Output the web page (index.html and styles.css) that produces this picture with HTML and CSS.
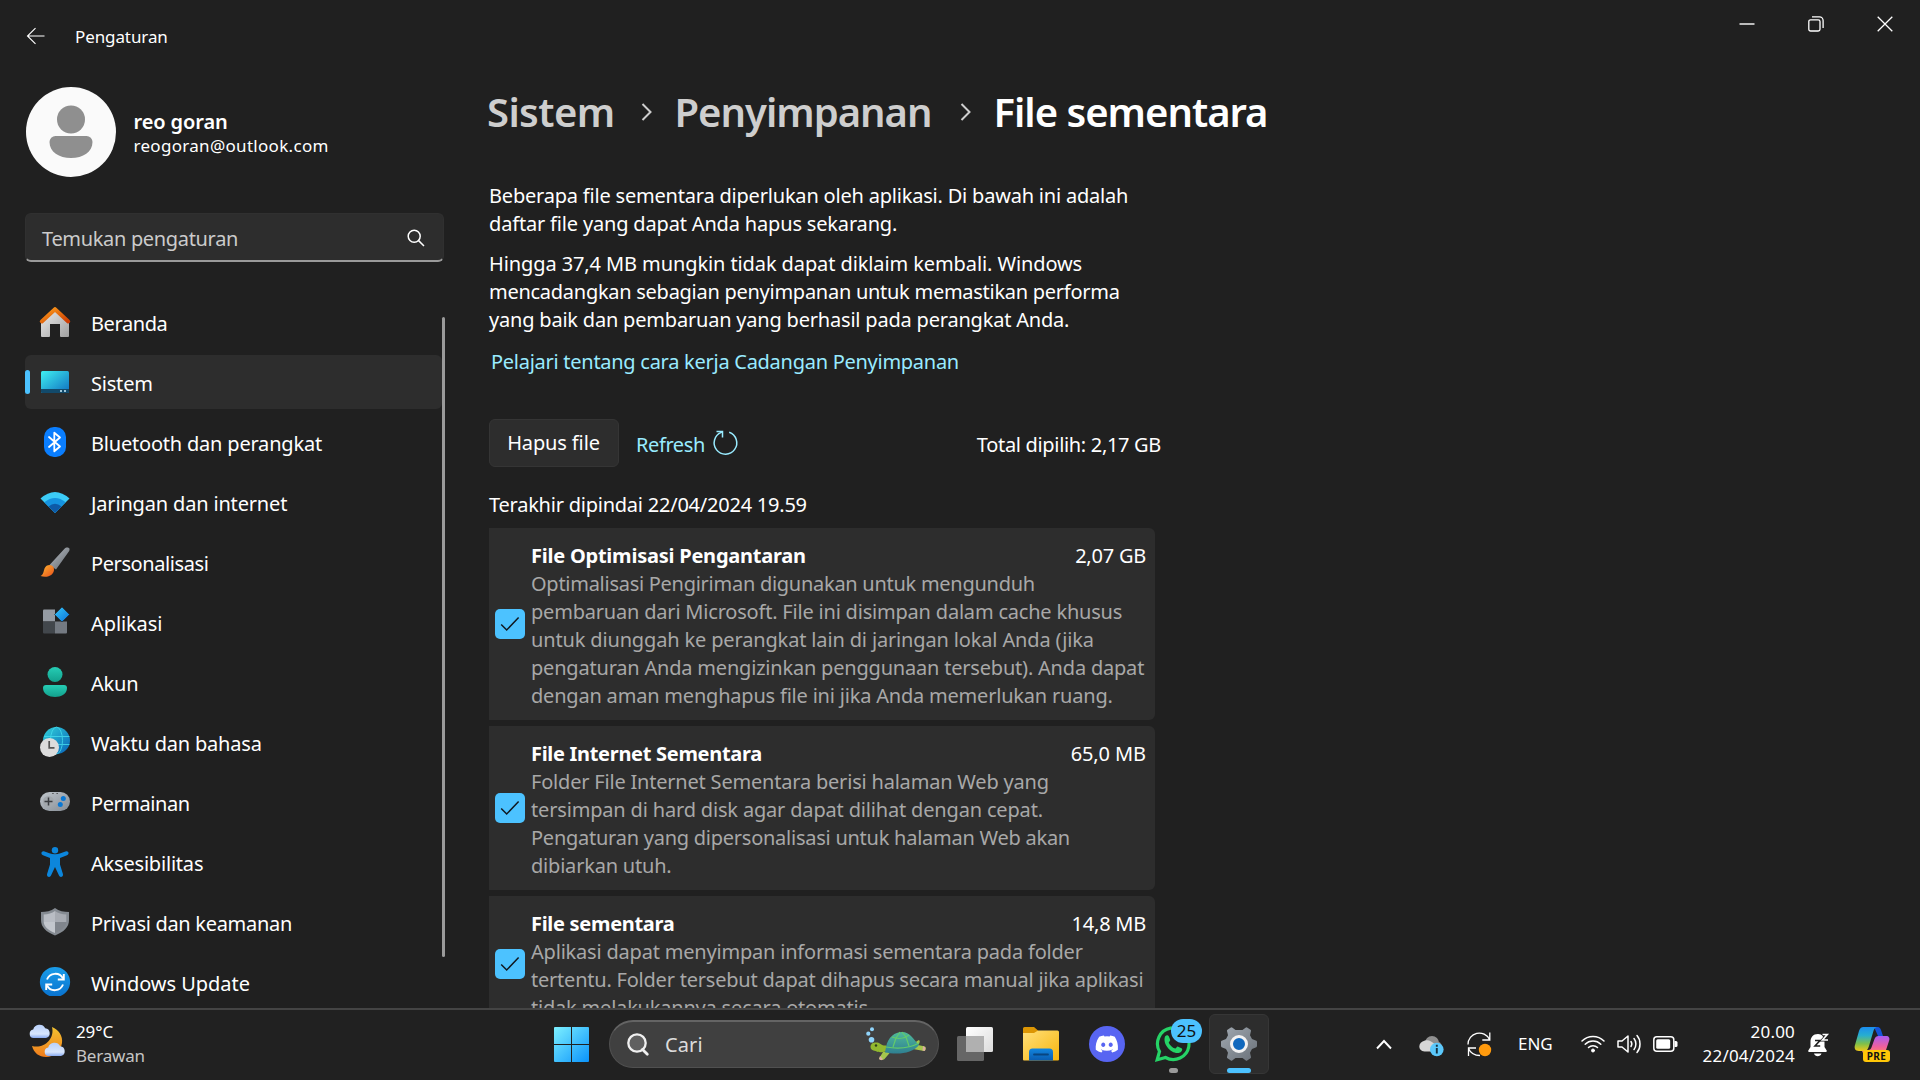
FILE: index.html
```
<!DOCTYPE html>
<html lang="id">
<head>
<meta charset="utf-8">
<title>Pengaturan</title>
<link rel="stylesheet" href="styles.css">
</head>
<body>
<div class="window">
  <header class="titlebar">
    <svg class="back" width="20" height="18" viewBox="0 0 20 18" fill="none" stroke="#fff" stroke-width="1.1"><path d="M18.5 9H1.500M9.500 1.200L1.500 9l8 7.800"/></svg>
    <span class="app-name">Pengaturan</span>
    <div class="controls">
      <svg width="16" height="16" viewBox="0 0 16 16" stroke="#fff" stroke-width="1.4"><path d="M.5 8h15"/></svg>
      <svg width="16" height="16" viewBox="0 0 16 16" fill="none" stroke="#fff" stroke-width="1.3"><rect x=".8" y="3.800" width="11.200" height="11.200" rx="1.800"/><path d="M4 .9h7.500a3.600 3.600 0 0 1 3.600 3.600V12"/></svg>
      <svg width="16" height="16" viewBox="0 0 16 16" stroke="#fff" stroke-width="1.3"><path d="M.7.700l14.600 14.600M15.300.700L.7 15.300"/></svg>
    </div>
  </header>
  <div class="content">
    <aside class="sidebar">
      <div class="profile">
        <svg width="90" height="90" viewBox="0 0 90 90"><circle cx="45" cy="45" r="45" fill="#fafafa"/><g fill="#8f8f8f"><circle cx="45" cy="32.500" r="14"/><path d="M29.500 49h31a6 6 0 0 1 6 6c0 10-9.500 16-21.500 16s-21.500-6-21.500-16a6 6 0 0 1 6-6z"/></g></svg>
        <div>
          <div class="name">reo goran</div>
          <div class="email">reogoran@outlook.com</div>
        </div>
      </div>
      <div class="search">
        <span>Temukan pengaturan</span>
        <svg width="18" height="18" viewBox="0 0 18 18" fill="none" stroke="#fff" stroke-width="1.500"><circle cx="7.200" cy="7.200" r="6"/><path d="M11.600 11.600L17 17"/></svg>
      </div>
      <div class="nav-wrap">
      <nav class="nav">
        <a class="item ls-40">
          <svg width="30" height="30" viewBox="0 0 30 30"><defs><linearGradient id="hw" x2="1" y2="1"><stop stop-color="#eee"/><stop offset="1" stop-color="#a0a0a0"/></linearGradient><linearGradient id="hr" x2="1" y2="1"><stop stop-color="#ffa01c"/><stop offset="1" stop-color="#cc3b02"/></linearGradient></defs><path d="M1 14L15 2l14 12v15a1 1 0 0 1-1 1h-7a1 1 0 0 1-1-1V17H10v12a1 1 0 0 1-1 1H2a1 1 0 0 1-1-1z" fill="url(#hw)"/><path d="M1.800 14.500L15 2.200l13.200 12.300" fill="none" stroke="url(#hr)" stroke-width="4" stroke-linejoin="round" stroke-linecap="round"/></svg>
          <span>Beranda</span></a>
        <a class="item active ls-20">
          <svg width="30" height="30" viewBox="0 0 30 30"><defs><linearGradient id="sy" x2="1" y2="1"><stop stop-color="#3ff0f0"/><stop offset="1" stop-color="#0f6fc0"/></linearGradient></defs><rect x="1" y="4" width="28" height="22" rx="1.500" fill="url(#sy)"/><path d="M1 22h28v2.500a1.500 1.500 0 0 1-1.500 1.500h-25A1.500 1.500 0 0 1 1 24.500z" fill="#124a6b"/><path d="M20 23h2v2h-2zM24 23h2v2h-2z" fill="#9cc5d8"/></svg>
          <span>Sistem</span></a>
        <a class="item ls-20">
          <svg width="30" height="30" viewBox="0 0 30 30"><rect x="4" width="22" height="30" rx="10" fill="#0a7eff"/><path d="M9 10l11 9.500-5.700 4.800V5.700L20 10.500 9 20" fill="none" stroke="#fff" stroke-width="1.800" stroke-linejoin="round" stroke-linecap="round"/></svg>
          <span>Bluetooth dan perangkat</span></a>
        <a class="item ls-17">
          <svg width="30" height="30" viewBox="0 0 30 30"><path d="M.5 11.500Q15-1.500 29.500 11.500L15 26z" fill="#3cccf7"/><path d="M4.300 15.300Q15 6.500 25.700 15.300L15 26z" fill="#1593e0"/><path d="M8.500 19.500Q15 13.800 21.500 19.500L15 26z" fill="#0d5aa7"/></svg>
          <span>Jaringan dan internet</span></a>
        <a class="item ls-40">
          <svg width="30" height="30" viewBox="0 0 30 30"><defs><linearGradient id="br" x2="1" y2="1"><stop stop-color="#b9bec4"/><stop offset="1" stop-color="#60666d"/></linearGradient><linearGradient id="bt" x2="1" y2="1"><stop stop-color="#ffb830"/><stop offset="1" stop-color="#e8501c"/></linearGradient></defs><path d="M9.500 18L24.500 1.800C26-.1 31 0 29.200 4L16 22.500z" fill="url(#br)"/><path d="M4.500 21.500c2-5 9-4.500 9.500.5.300 6-6.500 9.500-13.500 7 2.800-1 3-4.500 4-7.500z" fill="url(#bt)"/></svg>
          <span>Personalisasi</span></a>
        <a class="item ls-10">
          <svg width="30" height="30" viewBox="0 0 30 30"><defs><linearGradient id="ap" x2="1" y2="1"><stop stop-color="#35c8fa"/><stop offset="1" stop-color="#0a70d8"/></linearGradient></defs><path d="M3 3.500a1 1 0 0 1 1-1h11v12H3z" fill="#959ba3"/><path d="M3 14.500h12v12H4a1 1 0 0 1-1-1z" fill="#42474c"/><path d="M15 14.500h12v11a1 1 0 0 1-1 1H15z" fill="#747a82"/><path d="M22 0l7.500 7.500L22 15l-7.500-7.500z" fill="url(#ap)" stroke="#202020" stroke-width=".6"/></svg>
          <span>Aplikasi</span></a>
        <a class="item ls-20">
          <svg width="30" height="30" viewBox="0 0 30 30"><defs><linearGradient id="ak" x2="0" y2="1"><stop stop-color="#26cdb5"/><stop offset="1" stop-color="#12a08c"/></linearGradient></defs><circle cx="15" cy="7.500" r="7.500" fill="url(#ak)"/><path d="M6 18h18a3 3 0 0 1 3 3c0 6-6 9-12 9S3 27 3 21a3 3 0 0 1 3-3z" fill="url(#ak)"/></svg>
          <span>Akun</span></a>
        <a class="item ls-20">
          <svg width="30" height="30" viewBox="0 0 30 30"><defs><linearGradient id="gl" x2="1" y2="1"><stop stop-color="#31d3da"/><stop offset="1" stop-color="#0860b8"/></linearGradient></defs><circle cx="16.500" cy="13.500" r="13.500" fill="url(#gl)"/><g fill="none" stroke="#46dcee" stroke-width="1" opacity=".8"><path d="M4 9.500h25.500M4 17.500h25.500"/><ellipse cx="16.500" cy="13.500" rx="6" ry="13.500"/></g><circle cx="9.500" cy="20.500" r="9.500" fill="#dcdcdc"/><path d="M9.200 14v6.800h5.300" fill="none" stroke="#555" stroke-width="1.700"/></svg>
          <span>Waktu dan bahasa</span></a>
        <a class="item ls-45">
          <svg width="30" height="30" viewBox="0 0 30 30"><defs><linearGradient id="gp" x2="1" y2="1"><stop stop-color="#bfc5cb"/><stop offset="1" stop-color="#858c94"/></linearGradient></defs><rect y="5" width="30" height="19" rx="9.500" fill="url(#gp)"/><circle cx="8.500" cy="14.500" r="5.500" fill="#a2a7ac"/><path d="M4.500 14.500h8M8.500 10.500v8" stroke="#3a3d41" stroke-width="1.500"/><circle cx="23.300" cy="11.500" r="2.500" fill="#0a78d4"/><circle cx="20.300" cy="17.500" r="2.500" fill="#0a78d4"/><path d="M12.300 6.500h1.300M16.500 6.500h1.300" stroke="#444" stroke-width="1.200"/></svg>
          <span>Permainan</span></a>
        <a class="item ls-20">
          <svg width="30" height="30" viewBox="0 0 30 30" fill="#0c86dc"><circle cx="15" cy="3.200" r="3.200"/><path d="M3.800 4.300c4 1.400 7.200 3 11.200 3s7.200-1.600 11.200-3c2.600-.4 3.300 3.100.8 3.900l-7 2.900v6.400l3 9.800c.5 2.600-3 3.600-4 1.300L15 20l-4 8.600c-1 2.300-4.500 1.300-4-1.300l3-9.800v-6.400L3 8.200C.5 7.400 1.200 3.900 3.800 4.300z"/></svg>
          <span>Aksesibilitas</span></a>
        <a class="item ls-30">
          <svg width="30" height="30" viewBox="0 0 30 30"><path d="M15 1c4 3.200 9 4 14 4v8c0 7-5 12-14 15.500C6 25 1 20 1 13V5c5 0 10-.8 14-4z" fill="#858b92"/><path d="M15 4v11H3.700V7.500C8 7.300 12 6.300 15 4z" fill="#b9bdc4"/><path d="M15 4v11h11.300V7.500C22 7.300 18 6.300 15 4z" fill="#a7abb2"/><path d="M15 15v11C8 23.500 4 19.500 3.700 15z" fill="#c3c7cd"/><path d="M15 15v11c7-2.500 11-6.500 11.300-11z" fill="#80858c"/></svg>
          <span>Privasi dan keamanan</span></a>
        <a class="item ls-05">
          <svg width="30" height="30" viewBox="0 0 30 30"><defs><linearGradient id="wu" x2="0" y2="1"><stop stop-color="#1a9ce8"/><stop offset="1" stop-color="#0a74d0"/></linearGradient></defs><path d="M15 0a15 15 0 0 1 5.500 29h-11A15 15 0 0 1 15 0z" fill="url(#wu)"/><g fill="none" stroke="#fff" stroke-width="1.900"><path d="M7 12.500A8.800 8.800 0 0 1 23 11.500"/><path d="M23 17.500A8.800 8.800 0 0 1 7 18.500"/><path d="M23.800 7v5.500h-6M6.200 23v-5.500h6"/></g></svg>
          <span>Windows Update</span></a>
      </nav>
      <div class="scrollbar"></div>
      </div>
    </aside>
    <main class="main">
      <h1 class="crumbs">
        <span class="crumb c1">Sistem <svg width="12" height="18" viewBox="0 0 12 18" fill="none" stroke="#cecece" stroke-width="2"><path d="M1.500 1l8 8-8 8"/></svg></span>
        <span class="crumb c2">Penyimpanan <svg width="12" height="18" viewBox="0 0 12 18" fill="none" stroke="#cecece" stroke-width="2"><path d="M1.500 1l8 8-8 8"/></svg></span>
        <span class="crumb c3">File sementara</span>
      </h1>
      <p class="intro">
        <span class="line">Beberapa file sementara diperlukan oleh aplikasi. Di bawah ini adalah</span>
        <span class="line ls-17">daftar file yang dapat Anda hapus sekarang.</span>
      </p>
      <p class="note">
        <span class="line ls-10">Hingga 37,4 MB mungkin tidak dapat diklaim kembali. Windows</span>
        <span class="line ls-27">mencadangkan sebagian penyimpanan untuk memastikan performa</span>
        <span class="line ls-20">yang baik dan pembaruan yang berhasil pada perangkat Anda.</span>
      </p>
      <a class="link ls-27">Pelajari tentang cara kerja Cadangan Penyimpanan</a>
      <div class="actions">
        <button class="button">Hapus file</button>
        <a class="refresh ls-40">Refresh</a>
        <svg width="25" height="26" viewBox="0 0 25 26" fill="none" stroke="#99ebff" stroke-width="1.500"><path d="M16.200 2.200a11.300 11.300 0 1 1-8 .2L9 2"/><path d="M3.500 1.500h6v6"/></svg>
        <span class="total">Total dipilih: 2,17 GB</span>
      </div>
      <p class="scanned">Terakhir dipindai 22/04/2024 19.59</p>
      <section class="card">
        <span class="check"><svg width="20" height="16" viewBox="0 0 20 16" fill="none" stroke="#101820" stroke-width="1.500"><path d="M1.200 8.500l5.500 5.500L18.600 1.500"/></svg></span>
        <div class="text">
          <div class="head"><b>File Optimisasi Pengantaran</b><span>2,07 GB</span></div>
          <p class="desc">
            <span class="line ls-27">Optimalisasi Pengiriman digunakan untuk mengunduh</span>
            <span class="line">pembaruan dari Microsoft. File ini disimpan dalam cache khusus</span>
            <span class="line ls-15">untuk diunggah ke perangkat lain di jaringan lokal Anda (jika</span>
            <span class="line">pengaturan Anda mengizinkan penggunaan tersebut). Anda dapat</span>
            <span class="line">dengan aman menghapus file ini jika Anda memerlukan ruang.</span>
          </p>
        </div>
      </section>
      <section class="card">
        <span class="check"><svg width="20" height="16" viewBox="0 0 20 16" fill="none" stroke="#101820" stroke-width="1.500"><path d="M1.200 8.500l5.500 5.500L18.600 1.500"/></svg></span>
        <div class="text">
          <div class="head"><b class="ls-30">File Internet Sementara</b><span class="ls-10">65,0 MB</span></div>
          <p class="desc">
            <span class="line">Folder File Internet Sementara berisi halaman Web yang</span>
            <span class="line ls-17">tersimpan di hard disk agar dapat dilihat dengan cepat.</span>
            <span class="line ls-25">Pengaturan yang dipersonalisasi untuk halaman Web akan</span>
            <span class="line">dibiarkan utuh.</span>
          </p>
        </div>
      </section>
      <section class="card">
        <span class="check"><svg width="20" height="16" viewBox="0 0 20 16" fill="none" stroke="#101820" stroke-width="1.500"><path d="M1.200 8.500l5.500 5.500L18.600 1.500"/></svg></span>
        <div class="text">
          <div class="head"><b class="ls-30">File sementara</b><span>14,8 MB</span></div>
          <p class="desc">
            <span class="line">Aplikasi dapat menyimpan informasi sementara pada folder</span>
            <span class="line ls-22">tertentu. Folder tersebut dapat dihapus secara manual jika aplikasi</span>
            <span class="line">tidak melakukannya secara otomatis.</span>
          </p>
        </div>
      </section>
    </main>
  </div>
</div>
<footer class="taskbar">
  <div class="weather">
    <svg width="36" height="36" viewBox="0 0 36 36"><defs><linearGradient id="mo" x2="0" y2="1"><stop stop-color="#f2c230"/><stop offset="1" stop-color="#f07c1c"/></linearGradient><linearGradient id="cl" x2="0" y2="1"><stop stop-color="#b8d0fa"/><stop offset=".7" stop-color="#d8e6fd"/><stop offset="1" stop-color="#88aaf0"/></linearGradient></defs><path d="M23 3c7 3 11 9 10 16-1.500 9-8 14-16 14C10 33 5 29 3 22c12 3 23-7 20-19z" fill="url(#mo)"/><path d="M4.500 14a4.300 4.300 0 0 1-.3-8.500 6.500 6.500 0 0 1 12-1.300A5 5 0 0 1 17 14z" fill="url(#cl)"/><path d="M19.500 32a4.300 4.300 0 0 1-.3-8.500 6.500 6.500 0 0 1 12-1.300A5 5 0 0 1 32 32z" fill="url(#cl)"/></svg>
    <div class="weather-text"><span>29°C</span><span class="sub">Berawan</span></div>
  </div>
  <div class="apps">
    <svg width="35" height="35" viewBox="0 0 35 35"><defs><linearGradient id="wi" x2="1" y2="1"><stop stop-color="#7df0ff"/><stop offset="1" stop-color="#0a93fb"/></linearGradient></defs><path d="M1 0h16v17H0V1a1 1 0 0 1 1-1zM18 0h16a1 1 0 0 1 1 1v16H18zM0 18h17v17H1a1 1 0 0 1-1-1zM18 18h17v16a1 1 0 0 1-1 1H18z" fill="url(#wi)"/></svg>
    <div class="pill">
      <svg width="22" height="24" viewBox="0 0 22 24" fill="none" stroke="#f0f0f0"><circle cx="10" cy="10" r="8.700" stroke-width="2.300" fill="#606060"/><path d="M15.500 16.500l4.800 4.800" stroke-width="2.800" stroke-linecap="round"/></svg>
      <span>Cari</span>
      <svg class="turtle" width="60" height="34" viewBox="0 0 60 34"><defs><linearGradient id="sh" x2="0" y2="1"><stop stop-color="#4fb99a"/><stop offset="1" stop-color="#2f8092"/></linearGradient></defs><g fill="#90d4fb"><circle cx="6" cy="2.200" r="2"/><circle cx="2.300" cy="6.700" r="2.100"/><circle cx="5.500" cy="12.800" r="2.800"/></g><path d="M50 15c4-4 5 0 2 3l7 1.500c1.500 2 1 4-1 4.500l-11-2zM17 25l-4 6.500c1 2 4 2 5.500.5l6-7z" fill="#a5c64d"/><path d="M57 19l2.500 1.500-.5 3.500-2.500-.5zM14 29l-1 3c1.500 1.500 3 1.500 4 0z" fill="#dcaea0"/><path d="M4.500 20c0-4 3.500-5 7-4.500 3 .5 4 3.500 9 3v6c-6 1-8 1-11-.5-3-.5-5-1.500-5-4z" fill="#92b82f"/><circle cx="10" cy="18.500" r="1.200" fill="#30401a"/><path d="M20 20C22 10 29 5 36 5c8 0 11 7 17 13-4 6-14 8.500-22 8.500-5 0-9-.5-12-1z" fill="url(#sh)"/><g fill="none" stroke="#63cb6a" stroke-width="1.200"><path d="M20 20c12 2 24 1 33-4M26 10c5 2 12 2 17-2M30 11l-3 9M40 10l3 9M30 11l4-6M40 10l-4-5"/></g></svg>
    </div>
    <svg class="tv" width="36" height="34" viewBox="0 0 36 34"><defs><linearGradient id="t1" x2="1" y2="1"><stop stop-color="#fff"/><stop offset="1" stop-color="#dcdcdc"/></linearGradient></defs><rect y="9" width="27" height="25" rx="1.500" fill="#666"/><rect x="9" width="27" height="25" rx="1.500" fill="url(#t1)"/><path d="M9 9h18v16H9z" fill="#b0b0b0"/></svg>
    <svg class="app" width="36" height="34" viewBox="0 0 36 34"><defs><linearGradient id="fo" x2="1" y2="1"><stop stop-color="#ffe07a"/><stop offset="1" stop-color="#f8b50d"/></linearGradient><linearGradient id="fb" x2="0" y2="1"><stop stop-color="#1285de"/><stop offset="1" stop-color="#0a5cb0"/></linearGradient></defs><path d="M0 1.500A1.500 1.500 0 0 1 1.500 0H11l4 3.500V8H0z" fill="#dc9604"/><path d="M0 6h11l4-2.500h19.500A1.500 1.500 0 0 1 36 5v27.500a1 1 0 0 1-1 1H1a1 1 0 0 1-1-1z" fill="url(#fo)"/><path d="M6 33.500V25a3.500 3.500 0 0 1 3.500-3.500h17A3.500 3.500 0 0 1 30 25v8.500z" fill="url(#fb)"/><path d="M11 27.500h14" stroke="#084580" stroke-width="1.800" stroke-linecap="round"/></svg>
    <svg class="app" width="36" height="36" viewBox="0 0 36 36"><circle cx="18" cy="18" r="18" fill="#5865f2"/><path transform="translate(6.700 6.700) scale(.94)" fill="#fff" d="M20.317 4.370a19.800 19.800 0 0 0-4.885-1.515c-.21.375-.455.880-.608 1.250a18.300 18.300 0 0 0-5.487 0c-.163-.4-.405-.875-.617-1.250A19.700 19.700 0 0 0 3.677 4.370C.533 9.046-.32 13.580.1 18.058a19.900 19.900 0 0 0 5.993 3.030c.46-.63.873-1.295 1.226-1.994a13 13 0 0 1-1.872-.892l.37-.29c3.928 1.793 8.180 1.793 12.062 0l.37.290c-.6.35-1.220.645-1.873.892.36.700.772 1.362 1.225 1.993a19.800 19.800 0 0 0 6.002-3.030c.5-5.177-.838-9.674-3.286-13.687zM8.020 15.330c-1.183 0-2.157-1.085-2.157-2.420 0-1.332.955-2.418 2.157-2.418 1.210 0 2.176 1.095 2.157 2.420 0 1.332-.956 2.418-2.157 2.418zm7.975 0c-1.183 0-2.157-1.085-2.157-2.420 0-1.332.955-2.418 2.157-2.418 1.210 0 2.176 1.095 2.157 2.420 0 1.332-.946 2.418-2.157 2.418z"/></svg>
    <div class="whatsapp">
      <svg width="36" height="36" viewBox="0 0 36 36"><path d="M2.200 33.800l2.300-8.300A15.800 15.800 0 1 1 10.500 31.500z" fill="none" stroke="#25d366" stroke-width="3.200"/><path d="M10 10.500c1.500-1.800 3.300-1.500 4 .3l1.200 3c.3 1-1.300 2.200-1.500 2.900 1.500 2.900 3.500 4.700 6.500 5.900.8-.3 1.700-2.200 2.500-2.200l3.800 1.800c1.700 1 .2 3.500-1.500 4.300C18 29.500 7 19 10 10.500z" fill="#25d366"/></svg>
      <span class="badge">25</span>
      <i class="dot"></i>
    </div>
    <div class="tile">
      <svg width="36" height="36" viewBox="0 0 36 36"><defs><linearGradient id="ge" x2="1" y2="1"><stop stop-color="#a0a8b0"/><stop offset="1" stop-color="#6a7179"/></linearGradient></defs><path d="M9.500 1.800c.8-.7 1.300-.7 2 0l3 2.200h7l3-2.200c.7-.7 1.200-.7 2 0l3 2c.7.700.7 1 .3 2l-.8 3.500 2 3.700 3.700 1.500c1 .3 1.300.8 1.300 1.700v3.600c0 .9-.3 1.400-1.300 1.700L31 23l-2 3.700.8 3.500c.4 1 .4 1.300-.3 2l-3 2c-.8.700-1.300.7-2 0l-3-2.200h-7l-3 2.200c-.7.700-1.200.7-2 0l-3-2c-.7-.7-.7-1-.3-2l.8-3.500L5 23l-3.700-1.500C.3 21.200 0 20.700 0 19.800v-3.600c0-.9.300-1.400 1.300-1.700L5 13l2-3.700-.8-3.500c-.4-1-.4-1.300.3-2z" fill="url(#ge)"/><circle cx="18" cy="18" r="7.500" fill="#1068bd" stroke="#f2f2f2" stroke-width="3"/></svg>
      <i class="running"></i>
    </div>
  </div>
  <div class="tray">
    <svg width="16" height="11" viewBox="0 0 16 11" fill="none" stroke="#fff" stroke-width="1.900"><path d="M1 9.500l7-7.500 7 7.500"/></svg>
    <svg class="cloudy" width="25" height="22" viewBox="0 0 25 22"><circle cx="13" cy="8" r="7" fill="#8f8f8f"/><circle cx="18" cy="11" r="4.500" fill="#8f8f8f"/><path d="M6 5.500c4-1 6 1 9 3v8H5.500C-1.500 16 -1.500 7 6 5.500z" fill="#d6d6d6"/><circle cx="17.800" cy="14.500" r="6.800" fill="#5bc8fb"/><path d="M17.800 13v5.500M17.800 9.800v2" stroke="#153040" stroke-width="1.900"/></svg>
    <svg class="sync" width="25" height="26" viewBox="0 0 25 26" fill="none" stroke="#fff" stroke-width="1.300"><path d="M1 13.500A11.300 11.300 0 0 1 22.500 8.500M22.800 1.500v7.500h-7.500M1.500 25v-8H9M1.500 17.500c2 4.500 6 7 11.500 7"/><circle cx="18" cy="19" r="6.200" fill="#ff9a0d" stroke="none"/></svg>
    <span class="lang">ENG</span>
    <svg class="wifi" width="24" height="18" viewBox="0 0 24 18" fill="none" stroke="#fff" stroke-width="1.500" stroke-linecap="round"><path d="M1 6a15.500 15.500 0 0 1 22 0M4.200 9.200a11 11 0 0 1 15.600 0M7.500 12.500a6.400 6.400 0 0 1 9 0"/><circle cx="12" cy="15.500" r="1.500" fill="#fff" stroke-width="1"/></svg>
    <svg class="vol" width="24" height="20" viewBox="0 0 24 20" fill="none" stroke="#fff" stroke-width="1.500" stroke-linecap="round" stroke-linejoin="round"><path d="M1 7v6h4l6 5V2L5 7zM14 7.500c1 1.500 1 3.500 0 5M17 4.500c2.500 3 2.500 8 0 11M20 1.500c4 4.500 4 12.500 0 17"/></svg>
    <svg class="bat" width="25" height="16" viewBox="0 0 25 16"><rect x=".8" y=".8" width="20" height="14.400" rx="3" fill="none" stroke="#fff" stroke-width="1.500"/><rect x="3.200" y="3.200" width="14" height="9.600" rx="1.500" fill="#fff"/><path d="M21.500 5h1.500a1.500 1.500 0 0 1 1.500 1.500v3A1.500 1.500 0 0 1 23 11h-1.500z" fill="#fff"/></svg>
    <div class="clock"><span class="time">20.00</span><span>22/04/2024</span></div>
    <svg class="bell" width="22" height="24" viewBox="0 0 22 24"><path d="M10 1C5 1 2.500 4.500 2.500 9v5L.3 17.500c-.3.900.200 1.500 1 1.500h16.400c.8 0 1.300-.6 1-1.500L16.500 14V9C16.500 4.500 14 1 10 1zM6 20.500h7.500c-1 3.500-6.500 3.500-7.500 0z" fill="#fff"/><path d="M7 7.500h5l-5 5.500h5.200" fill="none" stroke="#202020" stroke-width="1.600"/><path d="M14.500 1.500h4.800l-4.800 5.500H20" fill="none" stroke="#202020" stroke-width="3"/><path d="M14.500 1.500h4.800l-4.800 5.500H20" fill="none" stroke="#fff" stroke-width="1.600"/></svg>
    <div class="copilot">
      <svg width="36" height="28" viewBox="0 0 36 28"><defs><linearGradient id="c1" x2="0" y2="1"><stop stop-color="#1b8df0"/><stop offset=".35" stop-color="#27aed0"/><stop offset=".7" stop-color="#7fc04a"/><stop offset="1" stop-color="#f0c818"/></linearGradient><linearGradient id="c2" x2="0" y2="1"><stop stop-color="#a95cf2"/><stop offset=".6" stop-color="#f0609c"/><stop offset="1" stop-color="#ff8a60"/></linearGradient></defs><path d="M20 1h3c3 0 3.800 2 4.500 4.500L29 10h-5z" fill="#1453d8"/><path d="M29 10h3c3 0 4 2 3 5l-3 9c-1 3-3 4-5 4H12c-3 0-4-2-4-4h6c2 0 3-1 4-4l2.500-7c.800-2 2-3 4-3z" fill="url(#c2)"/><path d="M9.500 1H23c-2 .5-3 2-3.700 4.500L15 20c-1 3-2 5-5 5H5c-4 0-5-3-4-6L5 5C6 2.500 7 1 9.500 1z" fill="url(#c1)"/></svg>
      <span class="pre">PRE</span>
    </div>
  </div>
</footer>
</body>
</html>
```
FILE: styles.css
```
* { box-sizing: border-box; }
body {
  margin: 0;
  width: 1920px;
  height: 1080px;
  overflow: hidden;
  background: #202020;
  color: #fff;
  font: 20px/28px "Noto Sans", "Open Sans", sans-serif;
  letter-spacing: -0.2px;
}
h1, p { margin: 0; font-weight: 400; }
svg { display: block; flex: none; overflow: visible; }

.window { height: 1008px; overflow: hidden; display: flex; flex-direction: column; }
.titlebar { height: 72px; display: flex; align-items: center; padding-left: 26px; }
.app-name { margin-left: 29px; font-size: 17px; letter-spacing: -0.1px; padding-top: 2px; }
.controls { margin-left: auto; align-self: flex-start; display: flex; gap: 53px; padding: 16px 27.5px 0 0; }
.content { display: flex; flex: 1; min-height: 0; }

.sidebar { width: 445px; padding: 15px 0 0 25px; display: flex; flex-direction: column; }
.profile { display: flex; align-items: center; gap: 17.500px; padding-left: 1px; height: 90px; }
.name { font-weight: 600; letter-spacing: -0.1px; padding-top: 1px; line-height: 27px; }
.email { font-size: 17px; letter-spacing: 0.3px; line-height: 22px; }
.search {
  height: 49px; margin-top: 36px; width: 419px;
  display: flex; align-items: center; justify-content: space-between;
  padding: 4px 18px 0 16px;
  background: #2d2d2d; border: 1px solid #303030; border-bottom: 2px solid #9a9a9a; border-radius: 6px;
  color: #cbcbcb; letter-spacing: -0.33px;
}
.search svg { margin-bottom: 2px; }
.nav-wrap { display: flex; flex: 1; min-height: 0; margin-top: 33px; overflow: hidden; }
.nav { width: 417px; display: flex; flex-direction: column; gap: 6px; }
.item { height: 54px; flex: none; display: flex; align-items: center; gap: 21px; padding-left: 15px; border-radius: 6px; }
.item span { padding-top: 3px; }
.item.active { background: #2d2d2d; padding-left: 0; }
.item.active::before { content: ""; width: 5px; height: 24px; border-radius: 3px; background: #4cc2ff; margin-right: -11px; }
.scrollbar { width: 3px; height: 640px; margin-top: 22px; background: #9a9a9a; border-radius: 2px; }

.main { margin-left: 44px; padding-top: 12px; width: 672px; }
.crumbs {
  display: grid; grid-template-columns: 187.500px 319px auto; justify-content: start;
  margin-left: -2px; height: 56px;
  font-weight: 600; font-size: 40px; line-height: 56px; letter-spacing: -1px; white-space: nowrap;
}
.crumb { display: flex; justify-content: space-between; align-items: center; }
.crumb svg { margin: 0 22px 1px 0; }
.c1, .c2 { color: #cecece; }
.c1 { letter-spacing: -0.6px; }
.intro { margin-top: 42px; }
.note { margin-top: 12px; }
.line { display: block; white-space: nowrap; }
.link { display: block; margin: 14px 0 0 2px; color: #99ebff; }
.actions { display: flex; align-items: center; height: 48px; margin-top: 43px; }
.button {
  width: 130px; height: 48px; padding: 0 1px 0 0;
  background: #2d2d2d; border: 1px solid #353535; border-radius: 6px;
  color: #fff; font: inherit; letter-spacing: -0.13px;
}
.refresh { color: #99ebff; margin: 3px 8px 0 17px; }
.actions svg { margin-bottom: 1px; }
.total { margin: 3px 0 0 auto; letter-spacing: -0.32px; }
.scanned { margin: 24px 0 9px; letter-spacing: -0.23px; }
.card {
  width: 666px; margin-bottom: 6px; padding: 14px 9px 10px 6px;
  display: flex; align-items: center; gap: 6px;
  background: #2d2d2d; border-radius: 0 6px 6px 0;
}
.check {
  width: 30px; height: 30px; flex: none; margin-top: -4px; border-radius: 5px; background: #4cc2ff;
  display: flex; align-items: center; justify-content: center;
}
.text { flex: 1; }
.head { display: flex; justify-content: space-between; letter-spacing: -0.23px; }
.desc { color: #a8a8a8; }

.taskbar {
  height: 72px; display: flex; align-items: center; padding-bottom: 2px;
  background: #212121; border-top: 2px solid #444;
  font-size: 17px; line-height: 24px; letter-spacing: 0;
}
.weather { width: 525px; margin-left: 29px; display: flex; align-items: center; gap: 11px; }
.weather svg { margin-bottom: 4px; }
.weather-text { display: flex; flex-direction: column; margin-bottom: 1px; letter-spacing: -0.1px; }
.sub { color: #c5c5c5; letter-spacing: -0.2px; }
.apps { display: flex; align-items: center; }
.pill {
  width: 330px; height: 48px; margin: 0 18px 0 20px; padding: 0 12px 0 17px;
  display: flex; align-items: center;
  background: #404040; border: 1px solid #505050; border-top: 2px solid #646464; border-radius: 24px;
  font-size: 20px; letter-spacing: 0.1px; color: #dcdcdc;
}
.pill span { margin-left: 16px; }
.turtle { margin-left: auto; margin-bottom: 2px; }
.app { margin-left: 30px; }
.whatsapp { position: relative; margin-left: 30px; }
.badge {
  position: absolute; left: 16px; top: -7px; width: 31px; height: 24px; border-radius: 12px;
  background: #4cc2ff; color: #101010; text-align: center; font-size: 17px; line-height: 24px;
}
.dot { position: absolute; left: 14px; top: 42px; width: 9px; height: 5px; border-radius: 3px; background: #9a9a9a; }
.tile {
  position: relative; width: 60px; height: 60px; margin-left: 18px;
  display: flex; align-items: center; justify-content: center;
  background: #2d2d2d; border: 1px solid #363636; border-radius: 6px;
}
.running { position: absolute; left: 17px; bottom: 0; width: 24px; height: 5px; border-radius: 3px; background: #4cc2ff; }
.tray { margin-left: auto; padding-right: 30px; display: flex; align-items: center; }
.cloudy { margin-left: 27.500px; margin-top: 3px; }
.sync { margin-left: 23px; }
.lang { margin-left: 26px; width: 37px; }
.wifi { margin-left: 26px; }
.vol { margin-left: 12px; }
.bat { margin-left: 12px; }
.clock { display: flex; flex-direction: column; align-items: flex-end; width: 117px; margin-bottom: 1px; letter-spacing: 0.2px; }
.bell { margin-left: 13px; margin-top: 1px; }
.copilot { position: relative; width: 36px; height: 36px; margin-left: 24px; }
.pre {
  position: absolute; right: 0; bottom: 0; width: 27px; height: 12px; border-radius: 3px;
  background: #ffc708; color: #111; text-align: center; font-size: 10px; line-height: 12px; font-weight: 700; letter-spacing: 0.3px;
}

/* tracking steps for individual labels and lines */
.ls-05 { letter-spacing: -0.05px; }
.ls-10 { letter-spacing: -0.1px; }
.ls-15 { letter-spacing: -0.15px; }
.ls-17 { letter-spacing: -0.17px; }
.ls-20 { letter-spacing: -0.2px; }
.ls-22 { letter-spacing: -0.22px; }
.ls-25 { letter-spacing: -0.25px; }
.ls-27 { letter-spacing: -0.27px; }
.ls-30 { letter-spacing: -0.3px; }
.ls-40 { letter-spacing: -0.4px; }
.ls-45 { letter-spacing: -0.45px; }
```
